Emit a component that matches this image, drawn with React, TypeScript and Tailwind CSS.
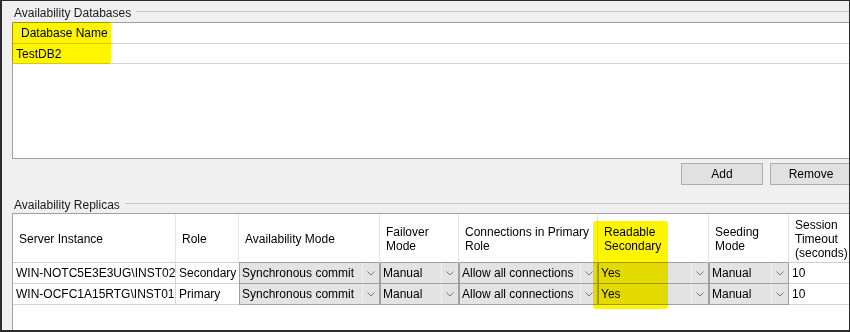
import React from "react";

type Cell = { text: string; combo?: boolean };

const colW = [
  "w-[163px]",
  "w-[63px]",
  "w-[141px]",
  "w-[79px]",
  "w-[139px]",
  "w-[111px]",
  "w-[80px]",
  "w-[90px]",
];

const headers: string[][] = [
  ["Server Instance"],
  ["Role"],
  ["Availability Mode"],
  ["Failover", "Mode"],
  ["Connections in Primary", "Role"],
  ["Readable", "Secondary"],
  ["Seeding", "Mode"],
  ["Session", "Timeout", "(seconds)"],
];

const isCombo = [false, false, true, true, true, true, true, false];

const rows: Cell[][] = [
  [
    { text: "WIN-NOTC5E3E3UG\\INST02" },
    { text: "Secondary" },
    { text: "Synchronous commit", combo: true },
    { text: "Manual", combo: true },
    { text: "Allow all connections", combo: true },
    { text: "Yes", combo: true },
    { text: "Manual", combo: true },
    { text: "10" },
  ],
  [
    { text: "WIN-OCFC1A15RTG\\INST01" },
    { text: "Primary" },
    { text: "Synchronous commit", combo: true },
    { text: "Manual", combo: true },
    { text: "Allow all connections", combo: true },
    { text: "Yes", combo: true },
    { text: "Manual", combo: true },
    { text: "10" },
  ],
];

const Chevron: React.FC = () => (
  <svg width="8" height="5" viewBox="0 0 8 5" className="block">
    <path d="M0.5 0.5 L4 4 L7.5 0.5" fill="none" stroke="#777777" strokeWidth="1" />
  </svg>
);

const GroupLabel: React.FC<{ label: string; className: string }> = ({ label, className }) => (
  <div className={`flex items-center pl-[12px] ${className}`}>
    <span className="pt-[2px] leading-[14px] text-[#1a1a1a]">{label}</span>
    <div className="ml-[5px] h-px flex-1 bg-[#c6c6c6]" />
  </div>
);

const Button: React.FC<{ label: string }> = ({ label }) => (
  <button
    type="button"
    className="flex h-[22px] w-[82px] items-center justify-center border border-[#adadad] bg-[#e1e1e1] leading-[14px] text-black"
  >
    {label}
  </button>
);

export default function App() {
  return (
    <div className="relative flex h-[332px] w-[850px] flex-col overflow-hidden border-t border-r border-b-2 border-l-2 border-[#2b2b2b] bg-[#f0f0f0] font-['Liberation_Sans',Arial,sans-serif] text-[12px] text-black">
      <GroupLabel label="Availability Databases" className="h-[21px] shrink-0" />

      <div className="ml-[10px] h-[137px] w-[850px] shrink-0 border border-[#a0a0a0] bg-white">
        <div className="flex h-[21px] items-center border-b border-[#d4d4d4] pl-[8px] leading-[14px]">
          Database Name
        </div>
        <div className="flex h-[20px] items-center border-b border-[#d4d4d4] pl-[3px] leading-[14px]">
          TestDB2
        </div>
      </div>

      <div className="mr-[-3px] mt-[4px] flex shrink-0 justify-end gap-[7px]">
        <Button label="Add" />
        <Button label="Remove" />
      </div>

      <GroupLabel label="Availability Replicas" className="mt-[9px] h-[19px] shrink-0" />

      <div className="ml-[10px] w-[860px] flex-1 border-t border-l border-[#a0a0a0] bg-white">
        <div className="flex h-[49px]">
          {headers.map((lines, i) => (
            <div
              key={i}
              className={`${colW[i]} flex shrink-0 items-center border-r border-b pl-[6px] pt-[2px] leading-[14px] ${
                isCombo[i] ? "border-r-[#e6e6e6] border-b-[#a0a0a0]" : "border-r-[#e6e6e6] border-b-[#d0d0d0]"
              }`}
            >
              <div>
                {lines.map((l) => (
                  <div key={l} className="whitespace-nowrap">
                    {l}
                  </div>
                ))}
              </div>
            </div>
          ))}
        </div>

        {rows.map((row, r) => (
          <div key={r} className="flex h-[21px]">
            {row.map((cell, i) =>
              cell.combo ? (
                <div
                  key={i}
                  className={`${colW[i]} flex shrink-0 border-x border-b border-[#a0a0a0] bg-[#e3e3e3] leading-[14px]`}
                >
                  <div className="flex flex-1 items-center overflow-hidden whitespace-nowrap pl-[2px]">{cell.text}</div>
                  <div className="flex w-[17px] items-center justify-center border-l border-[#f2f2f2]">
                    <Chevron />
                  </div>
                </div>
              ) : (
                <div
                  key={i}
                  className={`${colW[i]} flex shrink-0 items-center whitespace-nowrap border-b pl-[3px] leading-[14px] ${
                    i === 1 ? "" : "border-r"
                  } border-[#d4d4d4]`}
                >
                  {cell.text}
                </div>
              )
            )}
          </div>
        ))}
      </div>

      <div className="pointer-events-none absolute left-[10px] top-[21px] h-[42px] w-[99px] rounded-[3px] bg-[#fff500] mix-blend-multiply" />
      <div className="pointer-events-none absolute left-[591px] top-[220px] h-[88px] w-[75px] rounded-[3px] bg-[#fff500] mix-blend-multiply" />
    </div>
  );
}
